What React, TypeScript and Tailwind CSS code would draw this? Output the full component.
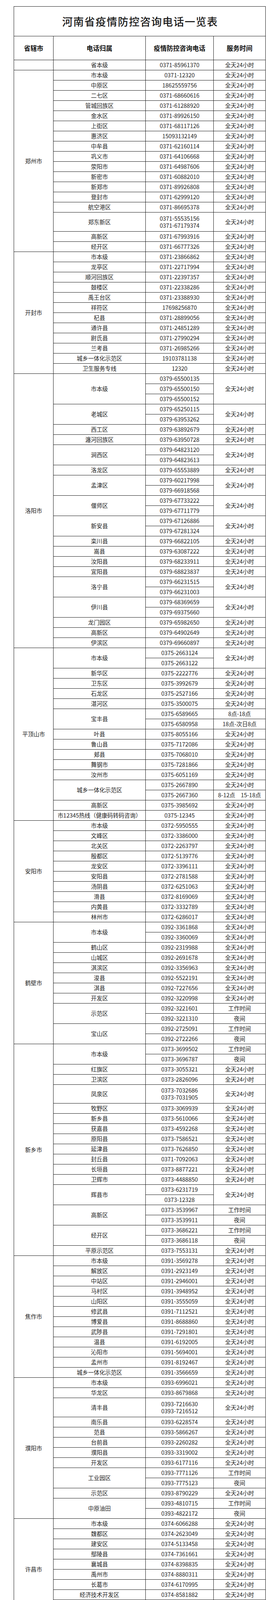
import React from 'react'

const T = '全天24小时'

type Item = { name: string; phones: string[]; times: string[]; lines?: boolean }
type Section = { city: string; items: Item[] }

const one = (name: string, phone: string, time = T): Item => ({ name, phones: [phone], times: [time] })
const split = (name: string, phones: string[], times: string[] = [T]): Item => ({ name, phones, times })
const stacked = (name: string, phones: string[]): Item => ({ name, phones, times: [T], lines: true })

const WORK = ['工作时间', '夜间']

const sections: Section[] = [
  { city: '', items: [one('省本级', '0371-85961370')] },
  {
    city: '郑州市',
    items: [
      one('市本级', '0371-12320'),
      one('中原区', '18625559756'),
      one('二七区', '0371-68660616'),
      one('管城回族区', '0371-61288920'),
      one('金水区', '0371-89926150'),
      one('上街区', '0371-68117126'),
      one('惠济区', '15093132149'),
      one('中牟县', '0371-62160114'),
      one('巩义市', '0371-64106668'),
      one('荥阳市', '0371-64987606'),
      one('新密市', '0371-60882010'),
      one('新郑市', '0371-89926808'),
      one('登封市', '0371-62999120'),
      one('航空港区', '0371-86695378'),
      stacked('郑东新区', ['0371-55535156', '0371-67179374']),
      one('高新区', '0371-67993916'),
      one('经开区', '0371-66777326'),
    ],
  },
  {
    city: '开封市',
    items: [
      one('市本级', '0371-23866862'),
      one('龙亭区', '0371-22717994'),
      one('顺河回族区', '0371-22397357'),
      one('鼓楼区', '0371-22338286'),
      one('禹王台区', '0371-23388930'),
      one('祥符区', '17698256870'),
      one('杞县', '0371-28899056'),
      one('通许县', '0371-24851289'),
      one('尉氏县', '0371-27990294'),
      one('兰考县', '0371-26985266'),
      one('城乡一体化示范区', '19103781138'),
      one('卫生服务专线', '12320'),
    ],
  },
  {
    city: '洛阳市',
    items: [
      split('市本级', ['0379-65500135', '0379-65500150', '0379-65500152']),
      split('老城区', ['0379-65250115', '0379-63953262']),
      one('西工区', '0379-63892679'),
      one('瀍河回族区', '0379-63950728'),
      split('涧西区', ['0379-64823120', '0379-64823613']),
      one('洛龙区', '0379-65553889'),
      split('孟津区', ['0379-60217998', '0379-66918568']),
      split('偃师区', ['0379-67733222', '0379-67711779']),
      split('新安县', ['0379-67126886', '0379-67281324']),
      one('栾川县', '0379-66822105'),
      one('嵩县', '0379-63087222'),
      one('汝阳县', '0379-68233911'),
      one('宜阳县', '0379-68823837'),
      split('洛宁县', ['0379-66231515', '0379-66231003']),
      split('伊川县', ['0379-68369659', '0379-69375660']),
      one('龙门园区', '0379-65982650'),
      one('高新区', '0379-64902649'),
      one('伊滨区', '0379-69660897'),
    ],
  },
  {
    city: '平顶山市',
    items: [
      split('市本级', ['0375-2663124', '0375-2663122']),
      one('新华区', '0375-2222776'),
      one('卫东区', '0375-3992679'),
      one('石龙区', '0375-2527166'),
      one('湛河区', '0375-3500075'),
      split('宝丰县', ['0375-6589665', '0375-6580958'], ['8点-18点', '18点-次日8点']),
      one('叶县', '0375-8055166'),
      one('鲁山县', '0375-7172086'),
      one('郏县', '0375-7068010'),
      one('舞钢市', '0375-7281866'),
      one('汝州市', '0375-6051169'),
      split('城乡一体化示范区', ['0375-2667890', '0375-2667360'], [T, '8-12点　15-18点']),
      one('高新区', '0375-3985692'),
      one('市12345热线（健康码转码咨询）', '0375-12345'),
    ],
  },
  {
    city: '安阳市',
    items: [
      one('市本级', '0372-5950555'),
      one('文峰区', '0372-3386000'),
      one('北关区', '0372-2263797'),
      one('殷都区', '0372-5139776'),
      one('龙安区', '0372-3396111'),
      one('安阳县', '0372-2781588'),
      one('汤阴县', '0372-6251063'),
      one('滑县', '0372-8169069'),
      one('内黄县', '0372-3332789'),
      one('林州市', '0372-6286017'),
    ],
  },
  {
    city: '鹤壁市',
    items: [
      split('市本级', ['0392-3361868', '0392-3360069'], [T, T]),
      one('鹤山区', '0392-2319988'),
      one('山城区', '0392-2691678'),
      one('淇滨区', '0392-3356963'),
      one('浚县', '0392-5522191'),
      one('淇县', '0392-7227656'),
      one('开发区', '0392-3220998'),
      split('示范区', ['0392-3221601', '0392-3221310'], WORK),
      split('宝山区', ['0392-2725091', '0392-2722266'], WORK),
    ],
  },
  {
    city: '新乡市',
    items: [
      split('市本级', ['0373-3699502', '0373-3696787'], WORK),
      one('红旗区', '0373-3055321'),
      one('卫滨区', '0373-2826096'),
      stacked('凤泉区', ['0373-7032686', '0373-7031905']),
      one('牧野区', '0373-3069939'),
      one('新乡县', '0373-5610066'),
      one('获嘉县', '0373-4592268'),
      one('原阳县', '0373-7586521'),
      one('延津县', '0373-7626850'),
      one('封丘县', '0371-7092063'),
      one('长垣县', '0373-8877221'),
      one('卫辉市', '0373-4488850'),
      split('辉县市', ['0373-6231719', '0373-12328']),
      split('高新区', ['0373-3539967', '0373-3539911'], WORK),
      split('经开区', ['0373-3686221', '0373-3686118'], WORK),
      one('平原示范区', '0373-7553131'),
    ],
  },
  {
    city: '焦作市',
    items: [
      one('市本级', '0391-3569278'),
      one('解放区', '0391-2923149'),
      one('中站区', '0391-2946001'),
      one('马村区', '0391-3948952'),
      one('山阳区', '0391-3555059'),
      one('修武县', '0391-7112521'),
      one('博爱县', '0391-8688860'),
      one('武陟县', '0391-7291801'),
      one('温县', '0391-6192005'),
      one('沁阳市', '0391-5694001'),
      one('孟州市', '0391-8192467'),
      one('城乡一体化示范区', '0391-3566659'),
    ],
  },
  {
    city: '濮阳市',
    items: [
      one('市本级', '0393-6996021'),
      one('华龙区', '0393-8679868'),
      stacked('清丰县', ['0393-7216630', '0393-7216512']),
      one('南乐县', '0393-6228574'),
      one('范县', '0393-5866267'),
      one('台前县', '0393-2260282'),
      one('濮阳县', '0393-3319002'),
      one('开发区', '0393-6177116'),
      split('工业园区', ['0393-7771126', '0393-7775123'], WORK),
      one('示范区', '0393-8790229'),
      split('中原油田', ['0393-4810715', '0393-4822172'], WORK),
    ],
  },
  {
    city: '许昌市',
    items: [
      one('市本级', '0374-6066288'),
      one('魏都区', '0374-2623049'),
      one('建安区', '0374-5133458'),
      one('鄢陵县', '0374-7361661'),
      one('襄城县', '0374-8398835'),
      one('禹州市', '0374-8880311'),
      one('长葛市', '0374-6170995'),
      one('经济技术开发区', '0374-8581882'),
      one('东城区', '0374-2959916'),
      one('示范区', '0374-3373519'),
    ],
  },
  {
    city: '漯河市',
    items: [
      one('市本级', '0395-3132963'),
      split('源汇区', ['0395-6986835', '0395-2390001']),
      one('郾城区', '0395-3288277'),
      one('召陵区', '0395-2639087'),
      split('舞阳县', ['0395-7158788', '0395-7139880']),
      one('临颍县', '0395-8899656'),
      split('经济技术开发区', ['0395-5757977', '0395-3221118']),
      one('城乡一体化示范区', '0395-3195081'),
      one('西城区', '0395-2905001'),
    ],
  },
  {
    city: '三门峡市',
    items: [
      one('市本级', '0398－2866972'),
      one('湖滨区', '0398－8525170'),
      one('陕州区', '0398－3832093'),
      one('渑池县', '0398－4812273'),
      one('卢氏县', '0398－8525175'),
      one('义马市', '0398－5655846'),
      one('灵宝市', '0398－8822689'),
      one('开发区', '0398－2895147'),
      one('示范区', '0398－2751555'),
    ],
  },
  {
    city: '南阳市',
    items: [
      one('市本级', '0377－63186301'),
      one('宛城区', '0377-63211169'),
      one('卧龙区', '0377-62208181'),
      one('南召县', '0377-66911586'),
      one('方城县', '0377-67228180'),
      one('西峡县', '0377－69699606'),
      one('镇平县', '0377-65921350'),
      one('内乡县', '0377－65332017'),
      one('淅川县', '0377-69227238'),
      one('社旗县', '0377-67966001'),
      one('唐河县', '0377-68975369'),
      one('新野县', '0377-66290120'),
      one('桐柏县', '0377-68272978'),
      one('邓州市', '0377-60320123'),
      one('鸭河工区', '0377-66626369'),
      one('卧龙综合保税区', '0377-60327011'),
      one('城乡一体化示范区', '0377-61166001'),
      one('高新区', '0377-62378369'),
      one('官庄工区', '0377-63799397'),
    ],
  },
  {
    city: '商丘市',
    items: [
      stacked('市本级', ['0370－3229109', '0370－3229100']),
      stacked('梁园区', ['0370－3671066', '0370－2276336']),
      one('睢阳区', '0370－3020067'),
      split('民权县', ['0370－8911116', '0370－8911117', '0370－6703786']),
      one('睢县', '0370－6027765'),
      stacked('宁陵县', ['0370－6019778', '0370－7758032']),
      one('柘城县', '0370－7515120'),
      stacked('虞城县', ['0370－4166280', '\u00a00370－4166287']),
      stacked('夏邑县', ['0370－3073771', '0370－3073772']),
      one('永城市', '0370－2712270'),
      one('城乡一体化示范区', '0370－2223101'),
    ],
  },
  {
    city: '信阳市',
    items: [
      one('市本级', '0376-6319227'),
      one('浉河区', '0376-6618588'),
      one('平桥区', '0376-3702785'),
      one('罗山县', '0376-2172818'),
      one('光山县', '0376-8855296'),
      one('新县', '0376-2791518'),
      one('商城县', '0376-7921538'),
      one('固始县', '0376-4667088'),
      one('潢川县', '0376-3371936'),
      one('淮滨县', '0376-7732008/009'),
      one('息县', '0376-5956698'),
      one('羊山新区', '0376-6306569'),
      one('信阳高新区', '0376-3706122'),
      one('南湾管理区', '0376-6373637'),
      one('潢川开发区', '0376-3111288'),
      one('鸡公山管理区', '0376-6991966'),
      one('上天梯管理区', '0376-3886023'),
    ],
  },
  {
    city: '周口市',
    items: [
      one('市本级', '0394-8355589'),
      one('川汇区', '0394-7891660'),
      one('淮阳区', '0394-2682581'),
      one('扶沟县', '0394-7719678'),
      one('西华县', '0394-2551820'),
      one('商水县', '0394-5441626'),
      one('沈丘县', '0394-5102226'),
      one('郸城县', '0394-3200558'),
      one('太康县', '0394-6816116'),
      one('鹿邑县', '0394-7996695'),
      one('项城市', '0394-7736743'),
      one('开发区', '0394-8536990'),
      one('城乡一体化示范区', '0394-7735602'),
      one('港区', '0394-8597005'),
    ],
  },
  {
    city: '驻马店市',
    items: [
      one('市本级', '0396-2913970'),
      one('驿城区', '0396-2922998'),
      one('西平县', '0396-2756519'),
      one('上蔡县', '0396-6923915'),
      one('平舆县', '0396-5088613'),
      one('正阳县', '0396-8766607'),
      one('确山县', '0396-7022644'),
      one('泌阳县', '0396-7912356'),
      one('汝南县', '0396-8052088'),
      one('遂平县', '0396-4950612'),
      one('新蔡县', '0396-5989597'),
      one('开发区', '0396-2992636'),
      one('示范区', '0396-2600275'),
      one('高新区', '0396-3829000'),
    ],
  },
  {
    city: '济源市',
    items: [split('市本级', ['0391-6912120', '0391-12345'], [T, T])],
  },
]

const cell = 'border border-[#1a1a1a] p-0 text-center align-middle whitespace-nowrap'

function CityRows({ section }: { section: Section }) {
  const total = section.items.reduce((n, i) => n + (i.lines ? 1 : i.phones.length), 0)
  const rows: React.ReactNode[] = []

  section.items.forEach((item, ii) => {
    const n = item.lines ? 1 : item.phones.length
    const mergedTime = item.times.length === 1
    for (let k = 0; k < n; k++) {
      rows.push(
        <tr key={`${ii}-${k}`} className={item.lines ? 'h-[48.5px]' : 'h-[26px]'}>
          {ii === 0 && k === 0 && (
            <td rowSpan={total} className={cell}>
              {section.city}
            </td>
          )}
          {k === 0 && (
            <td rowSpan={n} className={cell}>
              {item.name}
            </td>
          )}
          <td className={cell}>
            {item.lines ? (
              <div className="leading-[18px]">
                {item.phones.map((p) => (
                  <div key={p}>{p}</div>
                ))}
              </div>
            ) : (
              item.phones[k]
            )}
          </td>
          {(!mergedTime || k === 0) && (
            <td rowSpan={mergedTime ? n : 1} className={cell}>
              {mergedTime ? item.times[0] : item.times[k]}
            </td>
          )}
        </tr>
      )
    }
  })

  return <>{rows}</>
}

export default function App() {
  return (
    <div className="relative h-[6866px] overflow-hidden bg-white pl-[35px] pt-4 font-['Noto_Sans_CJK_SC','Noto_Sans',sans-serif] text-[14.5px] leading-none text-[#222]">
      <table className="w-[644px] table-fixed border-collapse">
        <colgroup>
          <col className="w-[101px]" />
          <col className="w-[236px]" />
          <col className="w-[174px]" />
          <col className="w-[133px]" />
        </colgroup>
        <tbody>
          <tr className="h-[76px]">
            <td colSpan={4} className={cell}>
              <span className="pl-[2px] text-[27px] font-medium tracking-[1.5px] text-[#1a1a1a]">
                河南省疫情防控咨询电话一览表
              </span>
            </td>
          </tr>
          <tr className="h-[61px] text-[16.5px] font-bold text-[#111]">
            <td className={cell}>省辖市</td>
            <td className={cell}>电话归属</td>
            <td className={cell}>疫情防控咨询电话</td>
            <td className={cell}>服务时间</td>
          </tr>
          {sections.map((s, i) => (
            <CityRows key={i} section={s} />
          ))}
        </tbody>
      </table>

      {/* faded image strip lying over the last row */}
      <div className="absolute bottom-0 left-[275px] flex h-[34px] w-[160px] bg-white/70">
        <div className="w-[64px]" />
        <div className="w-[8px] bg-gradient-to-b from-white/0 to-[#b8c4d6]/70" />
        <div className="w-[30px]" />
        <div className="w-[14px] bg-gradient-to-b from-white/0 to-[#9eabc0]/70" />
        <div className="flex-1 bg-gradient-to-b from-white/0 to-[#dfe5ee]/70" />
      </div>
    </div>
  )
}
